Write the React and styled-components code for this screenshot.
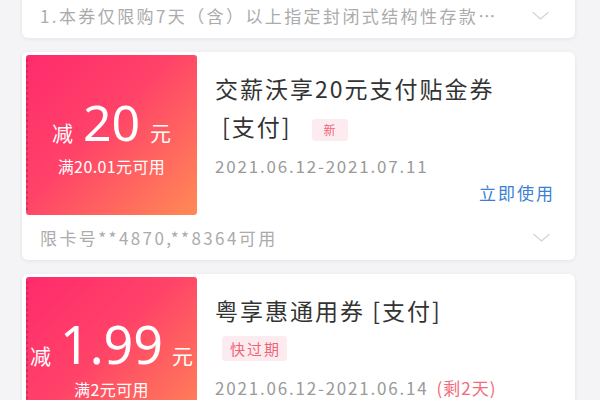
import React from "react";
import styled, { createGlobalStyle } from "styled-components";

const Global = createGlobalStyle`
  html, body { margin: 0; padding: 0; }
  body {
    background: #f4f4f6;
    font-family: "Noto Sans CJK SC", "Noto Sans", sans-serif;
    width: 600px;
    height: 400px;
    overflow: hidden;
  }
`;

const Page = styled.div`
  width: 600px;
  height: 400px;
  overflow: hidden;
  background: #f4f4f6;
`;

const List = styled.div`
  display: flex;
  flex-direction: column;
  gap: 14px;
  width: 553px;
  margin: -7px 0 0 22px;
`;

const Card = styled.div`
  background: #fff;
  border-radius: 6px;
  box-shadow: 0 1px 4px rgba(0, 0, 0, 0.07);
  padding: ${(p) => (p.$noBody ? "0 4px" : "3px 3px 0 4px")};
`;

const Body = styled.div`
  display: flex;
  height: 160px;
`;

const Stub = styled.div`
  position: relative;
  flex: 0 0 171px;
  width: 171px;
  min-width: 0;
  overflow: hidden;
  border-radius: 3px;
  background: linear-gradient(135deg, #ff2a6d 0%, #ff4368 45%, #ff6a5e 75%, #ff8a55 100%);
  display: flex;
  flex-direction: column;
  align-items: center;
  justify-content: center;
  color: #fff;
  &::before {
    content: "";
    position: absolute;
    left: 0;
    top: 3px;
    bottom: 3px;
    width: 4px;
    background: radial-gradient(circle at 1px 2.5px, rgba(150, 40, 70, 0.55) 1.1px, transparent 1.5px);
    background-size: 4px 5.5px;
  }
`;

const Amount = styled.div`
  display: flex;
  align-items: baseline;
  line-height: 1;
  white-space: nowrap;
`;

const Unit = styled.span`
  font-size: 21px;
  margin: ${(p) => p.$m};
`;

const Value = styled.span`
  font-family: "Noto Sans", "Open Sans", sans-serif;
  font-size: ${(p) => p.$size}px;
  letter-spacing: ${(p) => p.$ls || 0}px;
`;

const Cond = styled.div`
  font-size: 16px;
  letter-spacing: 0.4px;
  margin-top: 11px;
  line-height: 1;
  white-space: nowrap;
`;

const Content = styled.div`
  flex: 1;
  display: flex;
  flex-direction: column;
  padding: 14px 19px 0 18px;
  min-width: 0;
`;

const Title = styled.div`
  font-size: 23px;
  letter-spacing: 2px;
  line-height: 38px;
  color: #333;
`;

const NoWrap = styled.span`
  white-space: nowrap;
  margin-left: ${(p) => p.$ml || 0}px;
`;

const Tag = styled.span`
  display: inline-block;
  vertical-align: middle;
  font-size: ${(p) => p.$size}px;
  line-height: 1;
  letter-spacing: ${(p) => p.$ls || 0}px;
  color: #f0647a;
  background: #fdecef;
  border-radius: 3px;
  padding: ${(p) => p.$pad};
  margin-left: ${(p) => p.$ml || 0}px;
`;

const TagLine = styled.div`
  height: 38px;
  display: flex;
  align-items: center;
  padding-left: 7px;
`;

const DateLine = styled.div`
  font-size: 17px;
  letter-spacing: 1.8px;
  line-height: 38px;
  margin-top: 2px;
  color: #9a9a9a;
  white-space: nowrap;
`;

const Remain = styled.span`
  color: #f26b7a;
  margin-left: 8px;
  letter-spacing: 1px;
`;

const Action = styled.div`
  align-self: flex-end;
  font-size: 17px;
  letter-spacing: 2px;
  margin: -4px -2px 0 0;
  color: #3b7fd2;
  line-height: 24px;
`;

const Footer = styled.div`
  height: 45px;
  display: flex;
  align-items: center;
  justify-content: space-between;
  padding: 0 22px 0 14px;
`;

const Note = styled.div`
  font-size: 17px;
  letter-spacing: 2.4px;
  color: #ababab;
  white-space: nowrap;
  overflow: hidden;
`;

const Chevron = () => (
  <svg width="17" height="10" viewBox="0 0 17 10" fill="none">
    <path d="M1 1.5 L8.5 8 L16 1.5" stroke="#d6d6d8" strokeWidth="1.4" strokeLinecap="round" strokeLinejoin="round" />
  </svg>
);

export default function App() {
  return (
    <Page>
      <Global />
      <List>
        <Card $noBody>
          <Footer>
            <Note>1.本券仅限购7天（含）以上指定封闭式结构性存款…</Note>
            <Chevron />
          </Footer>
        </Card>

        <Card>
          <Body>
            <Stub>
              <Amount>
                <Unit $m="0 10px 0 0">减</Unit>
                <Value $size={50}>20</Value>
                <Unit $m="0 0 0 10px">元</Unit>
              </Amount>
              <Cond>满20.01元可用</Cond>
            </Stub>
            <Content>
              <Title>
                交薪沃享20元支付贴金券 <NoWrap $ml={7}>[支付]</NoWrap>
                <Tag $size={12} $pad="5px 12px" $ml={20}>新</Tag>
              </Title>
              <DateLine>2021.06.12-2021.07.11</DateLine>
              <Action>立即使用</Action>
            </Content>
          </Body>
          <Footer>
            <Note>限卡号**4870,**8364可用</Note>
            <Chevron />
          </Footer>
        </Card>

        <Card>
          <Body>
            <Stub>
              <Amount>
                <Unit $m="0 9px 0 0">减</Unit>
                <Value $size={52}>1.99</Value>
                <Unit $m="0 0 0 9px">元</Unit>
              </Amount>
              <Cond>满2元可用</Cond>
            </Stub>
            <Content>
              <Title>粤享惠通用券 [支付]</Title>
              <TagLine>
                <Tag $size={15} $ls={2} $pad="5px 6px 5px 8px">快过期</Tag>
              </TagLine>
              <DateLine>
                2021.06.12-2021.06.14<Remain>(剩2天)</Remain>
              </DateLine>
            </Content>
          </Body>
        </Card>
      </List>
    </Page>
  );
}
